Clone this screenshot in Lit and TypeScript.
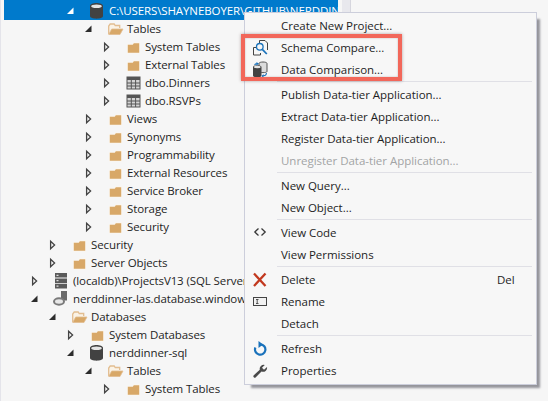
import { LitElement, html, css, svg, nothing } from 'lit';
import { customElement } from 'lit/decorators.js';

type Icon = 'folder' | 'open' | 'table' | 'db' | 'server' | 'azure';
type Node = { label: string; level: number; arrow: 'open' | 'closed'; icon: Icon; selected?: boolean };

const TREE: Node[] = [
  { label: 'C:\\USERS\\SHAYNEBOYER\\GITHUB\\NERDDINNER', level: 2, arrow: 'open', icon: 'db', selected: true },
  { label: 'Tables', level: 3, arrow: 'open', icon: 'open' },
  { label: 'System Tables', level: 4, arrow: 'closed', icon: 'folder' },
  { label: 'External Tables', level: 4, arrow: 'closed', icon: 'folder' },
  { label: 'dbo.Dinners', level: 4, arrow: 'closed', icon: 'table' },
  { label: 'dbo.RSVPs', level: 4, arrow: 'closed', icon: 'table' },
  { label: 'Views', level: 3, arrow: 'closed', icon: 'folder' },
  { label: 'Synonyms', level: 3, arrow: 'closed', icon: 'folder' },
  { label: 'Programmability', level: 3, arrow: 'closed', icon: 'folder' },
  { label: 'External Resources', level: 3, arrow: 'closed', icon: 'folder' },
  { label: 'Service Broker', level: 3, arrow: 'closed', icon: 'folder' },
  { label: 'Storage', level: 3, arrow: 'closed', icon: 'folder' },
  { label: 'Security', level: 3, arrow: 'closed', icon: 'folder' },
  { label: 'Security', level: 1, arrow: 'closed', icon: 'folder' },
  { label: 'Server Objects', level: 1, arrow: 'closed', icon: 'folder' },
  { label: '(localdb)\\ProjectsV13 (SQL Server 13.0)', level: 0, arrow: 'closed', icon: 'server' },
  { label: 'nerddinner-las.database.windows.net', level: 0, arrow: 'open', icon: 'azure' },
  { label: 'Databases', level: 1, arrow: 'open', icon: 'open' },
  { label: 'System Databases', level: 2, arrow: 'closed', icon: 'folder' },
  { label: 'nerddinner-sql', level: 2, arrow: 'open', icon: 'db' },
  { label: 'Tables', level: 3, arrow: 'open', icon: 'open' },
  { label: 'System Tables', level: 4, arrow: 'closed', icon: 'folder' },
];

type MenuIcon = 'schema' | 'data' | 'code' | 'delete' | 'rename' | 'refresh' | 'wrench';
type MenuItem = { label?: string; icon?: MenuIcon; shortcut?: string; disabled?: boolean; sep?: boolean };

const MENU: MenuItem[] = [
  { label: 'Create New Project...' },
  { label: 'Schema Compare...', icon: 'schema' },
  { label: 'Data Comparison...', icon: 'data' },
  { sep: true },
  { label: 'Publish Data-tier Application...' },
  { label: 'Extract Data-tier Application...' },
  { label: 'Register Data-tier Application...' },
  { label: 'Unregister Data-tier Application...', disabled: true },
  { sep: true },
  { label: 'New Query...' },
  { label: 'New Object...' },
  { sep: true },
  { label: 'View Code', icon: 'code' },
  { label: 'View Permissions' },
  { sep: true },
  { label: 'Delete', icon: 'delete', shortcut: 'Del' },
  { label: 'Rename', icon: 'rename' },
  { label: 'Detach' },
  { sep: true },
  { label: 'Refresh', icon: 'refresh' },
  { label: 'Properties', icon: 'wrench' },
];

const treeIcons: Record<Icon, unknown> = {
  folder: svg`<path d="M2 5h5.500l1-1.700H15V14.500H2z" fill="#fbf6ee"/><path d="M2.800 5.800h5l1-1.600h5.400v9.500H2.800z" fill="#d8a868"/>`,
  open: svg`<path d="M1.700 13V5l1.500-2h4l1 1.500h4.500V7" fill="#fbf3e6" stroke="#e2bd90" stroke-width="1.300"/><path d="M1.700 13.500l3-5.500h11.300l-3 5.500z" fill="#d8a868" stroke="#e2bd90" stroke-width=".8"/>`,
  table: svg`<rect x="2" y="2" width="13" height="12" fill="#d4d4d4" stroke="#555" stroke-width="1"/><path d="M2 2h13v3H2z" fill="#555"/><path d="M2 8h13M2 11h13M6.300 5v9M10.600 5v9" stroke="#555" stroke-width="1" fill="none"/>`,
  db: svg`<path d="M1 3c0-4 13-4 13 0v10c0 3.500-13 3.500-13 0z" fill="#424242"/><ellipse cx="7.500" cy="3.200" rx="5.300" ry="1.800" fill="#e4e4e4"/>`,
  server: svg`<path d="M2 0h12v4.600H2zM2 5.500h12v4.400H2zM2 10.800h12v4.700H2z" fill="#5a5a5a"/><path d="M3.500 2.300h2M3.500 7.700h2M3.500 13.100h2" stroke="#ddd" stroke-width="1.200"/>`,
  azure: svg`<path d="M8 0h6v9.500H8z" fill="#6a6a6a"/><ellipse cx="6" cy="10.500" rx="5" ry="3.200" fill="#e8e8e8" stroke="#7a7a7a" stroke-width="2"/>`,
};

const menuIcons: Record<MenuIcon, unknown> = {
  schema: svg`<path d="M6.500 5V.5h5.500l2.500 2.500V10" fill="none" stroke="#444" stroke-width="1"/><path d="M.5 7.500h4.500M.5 7.500v7.500h7v-2" fill="none" stroke="#444" stroke-width="1"/><circle cx="6.800" cy="6.800" r="3.300" fill="#f7f7f7" stroke="#1a72bb" stroke-width="1.300"/><path d="M9.300 9.300l4.500 4.700" stroke="#1a72bb" stroke-width="1.700"/>`,
  data: svg`<path d="M6 1.500c0-2 8-2 8 0v8c0 1.500-8 1.500-8 0z" fill="#dcdcdc" stroke="#555" stroke-width="1"/><path d="M0 5c0-2.500 8.500-2.500 8.500 0v8.500c0 2.500-8.500 2.500-8.500 0z" fill="#424242"/><ellipse cx="4.200" cy="5" rx="3.400" ry="1.200" fill="#e4e4e4"/><path d="M1 2.500a3 3 0 0 1 2.500-1.300V0l2.500 1.800-2.500 1.700V2.400a2 2 0 0 0-1.500.7z" fill="#1a72bb"/><path d="M14 11a3.500 3.500 0 0 1-3.500 3.200V16L8.500 14l2-2v1.200A2.500 2.500 0 0 0 13 11z" fill="#1a72bb"/>`,
  code: svg`<path d="M5.500 3.500L1.800 7l3.700 3.500M8.500 3.500l3.700 3.500-3.700 3.500" fill="none" stroke="#3a3a3a" stroke-width="1.300"/>`,
  delete: svg`<path d="M1 1.500l11.500 12.500M12.500 1.500L1 14" stroke="#c2391f" stroke-width="2.300" fill="none"/>`,
  rename: svg`<rect x=".5" y="3.500" width="13" height="8" fill="#f2f2f2" stroke="#444" stroke-width="1"/><path d="M3 5.500h2.500M3 9.500h2.500M4.200 5.500v4" stroke="#444" stroke-width=".9" fill="none"/>`,
  refresh: svg`<path d="M7.500 3.300A5.200 5.200 0 1 1 2.400 6.500" fill="none" stroke="#1a72bb" stroke-width="2.200"/><path d="M5.500 0v7l4.500-3.500z" fill="#1a72bb"/>`,
  wrench: svg`<path d="M14 4l-3 2.800-2-2L11.800 2a4 4 0 0 0-5 4.800L.8 12.300a1.400 1.400 0 0 0 2 2L8.500 8.500A4 4 0 0 0 14 4z" fill="#4a4a4a"/>`,
};

@customElement('app-root')
export class AppRoot extends LitElement {
  static styles = css`
    :host {
      display: block;
      position: relative;
      width: 548px;
      height: 401px;
      overflow: hidden;
      background: #f6f6f6;
      font-family: 'Open Sans', 'Noto Sans', sans-serif;
      font-size: 11.5px;
      color: #1e1e1e;
    }
    .tree {
      box-sizing: border-box;
      width: 340px;
      height: 401px;
      padding-left: 3px;
      border-left: 1px solid #e4e4ea;
      overflow: hidden;
    }
    .row {
      display: flex;
      align-items: center;
      height: 18px;
      width: 334px;
      white-space: nowrap;
      overflow: hidden;
    }
    .row.selected {
      box-sizing: border-box;
      height: 20px;
      padding-top: 2px;
      background: #007acc;
      color: #fff;
    }
    .arrow { flex: none; width: 16px; height: 18px; }
    .icon { flex: none; width: 16px; height: 16px; margin: 0 4px 0 11px; overflow: visible; }
    .label { flex: none; padding-bottom: 2px; letter-spacing: -0.1px; }
    .track {
      position: absolute;
      left: 342px;
      top: 0;
      width: 8px;
      height: 12px;
      background: #e8e8ed;
      border-right: 1px solid #d6d6de;
    }
    .menu {
      position: absolute;
      left: 244px;
      top: 12px;
      box-sizing: border-box;
      width: 293px;
      height: 373px;
      padding: 2px;
      background: #f7f7f7;
      border: 1px solid #cccedb;
      box-shadow: 5px 5px 2px -2px rgba(70, 70, 80, 0.55);
    }
    .item {
      display: flex;
      align-items: center;
      height: 22px;
    }
    .item.disabled { color: #a2a4a5; }
    .item-icon {
      flex: none;
      width: 16px;
      height: 16px;
      margin: 0 12px 0 6px;
      overflow: visible;
    }
    .item-label { flex: 1; padding-bottom: 2px; letter-spacing: -0.03px; }
    .shortcut { flex: none; width: 20px; margin-right: 17px; padding-bottom: 2px; }
    .sep {
      height: 1px;
      margin: 0 2px 2px 30px;
      background: #e0e0e6;
    }
    .highlight {
      position: absolute;
      left: 241px;
      top: 34px;
      box-sizing: border-box;
      width: 161px;
      height: 47px;
      border: 4px solid #f2675a;
      box-shadow: 0 0 3px rgba(90, 60, 60, 0.45), inset 0 0 2px rgba(90, 60, 60, 0.35);
    }
  `;

  private renderArrow(kind: 'open' | 'closed', selected: boolean) {
    return html`<svg class="arrow" viewBox="0 0 16 18">
      ${kind === 'open'
        ? svg`<path d="M11.500 5.500V12H5z" fill=${selected ? '#fff' : '#2c2c2c'}/>`
        : svg`<path d="M6.600 5.300l4 3.700-4 3.700z" fill="#f6f6f6" stroke="#444" stroke-width="1.300"/>`}
    </svg>`;
  }

  render() {
    return html`
      <div class="tree">
        ${TREE.map(
          (n) => html`<div class="row ${n.selected ? 'selected' : ''}">
            <span style="flex:none;width:${22 + n.level * 18}px"></span>
            ${this.renderArrow(n.arrow, !!n.selected)}
            <svg class="icon" viewBox="0 0 16 16">${treeIcons[n.icon]}</svg>
            <span class="label">${n.label}</span>
          </div>`,
        )}
      </div>
      <div class="track"></div>
      <div class="menu">
        ${MENU.map((m) =>
          m.sep
            ? html`<div class="sep"></div>`
            : html`<div class="item ${m.disabled ? 'disabled' : ''}">
                <svg class="item-icon" viewBox="0 0 16 16">${m.icon ? menuIcons[m.icon] : nothing}</svg>
                <span class="item-label">${m.label}</span>
                ${m.shortcut ? html`<span class="shortcut">${m.shortcut}</span>` : nothing}
              </div>`,
        )}
      </div>
      <div class="highlight"></div>
    `;
  }
}
